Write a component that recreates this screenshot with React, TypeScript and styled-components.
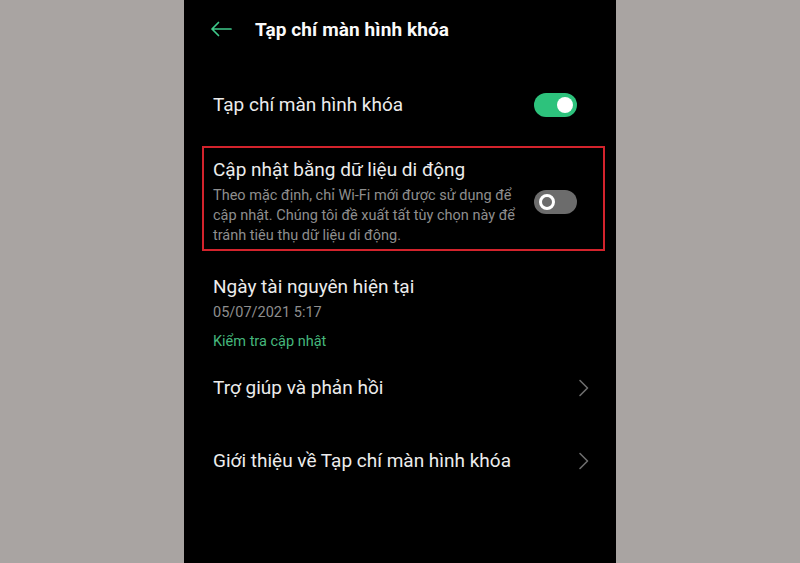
import React from 'react';
import styled, { createGlobalStyle } from 'styled-components';

const GlobalStyle = createGlobalStyle`
  html, body {
    margin: 0;
    padding: 0;
    background: #a9a4a2;
  }

  body {
    font-family: Roboto, "Noto Sans", "Liberation Sans", sans-serif;
  }
`;

const Page = styled.div`
  display: flex;
  justify-content: center;
  width: 800px;
  height: 563px;
  background: #a9a4a2;
`;

const Phone = styled.div`
  width: 432px;
  height: 563px;
  background: #000;
  display: flex;
  flex-direction: column;
  padding: 0 26px 0 29px;
  box-sizing: border-box;
  color: #ececec;
`;

const Header = styled.div`
  display: flex;
  align-items: center;
  height: 58px;
  margin-left: -3px;
  gap: 23px;
`;

const BackButton = styled.button`
  display: flex;
  align-items: center;
  padding: 0;
  border: 0;
  background: none;
  cursor: pointer;
`;

const Title = styled.h1`
  margin: 0;
  font-size: 19px;
  font-weight: 700;
  color: #fafafa;
  letter-spacing: 0.1px;
`;

const Row = styled.div<{ $mt: number }>`
  display: flex;
  align-items: center;
  justify-content: space-between;
  height: 52px;
  margin-top: ${p => p.$mt}px;
`;

const Label = styled.div`
  font-size: 19px;
  line-height: 24px;
  color: #ececec;
`;

const Highlight = styled.div`
  display: flex;
  align-items: center;
  justify-content: space-between;
  margin: 15px -15px 0 -11px;
  padding: 10px 26px 3px 9px;
  border: 2px solid #d3232c;
`;

const TextBlock = styled.div`
  display: flex;
  flex-direction: column;
`;

const Description = styled.div`
  margin-top: 4px;
  font-size: 14.5px;
  line-height: 20px;
  color: #8e8e8e;
  white-space: nowrap;

  span {
    display: block;
  }
`;

const InfoBlock = styled.div`
  display: flex;
  flex-direction: column;
  margin-top: 24px;
`;

const SubText = styled.div`
  margin-top: 4px;
  font-size: 14.5px;
  line-height: 20px;
  color: #8e8e8e;
`;

const LinkText = styled.a`
  margin-top: 9px;
  font-size: 14.5px;
  line-height: 20px;
  color: #45b77c;
  text-decoration: none;
  cursor: pointer;
`;

const Toggle = styled.div<{ $on: boolean }>`
  position: relative;
  flex-shrink: 0;
  width: 43px;
  height: 24px;
  border-radius: 12px;
  background: ${p => (p.$on ? '#2dc27c' : '#6c6c6c')};
`;

const Knob = styled.div<{ $on: boolean }>`
  position: absolute;
  top: 4px;
  left: ${p => (p.$on ? '23px' : '5px')};
  width: 16px;
  height: 16px;
  border-radius: 50%;
  box-sizing: border-box;
  background: ${p => (p.$on ? '#fff' : '#6c6c6c')};
  border: ${p => (p.$on ? '0' : '3px solid #fff')};
`;

const Chevron = () => (
  <svg width="12" height="18" viewBox="0 0 12 18" fill="none">
    <path d="M2 1.5 L9.5 9 L2 16.5" stroke="#6d6d6d" strokeWidth="1.6" strokeLinecap="round" strokeLinejoin="round" />
  </svg>
);

const BackArrow = () => (
  <svg width="22" height="16" viewBox="0 0 22 16" fill="none">
    <path d="M21 8 H2 M8.5 1.5 L2 8 L8.5 14.5" stroke="#3fc98a" strokeWidth="1.7" strokeLinecap="round" strokeLinejoin="round" />
  </svg>
);

const App = () => {
  return (
    <Page>
      <GlobalStyle />
      <Phone>
        <Header>
          <BackButton aria-label="back">
            <BackArrow />
          </BackButton>
          <Title>Tạp chí màn hình khóa</Title>
        </Header>

        <Row $mt={21}>
          <Label>Tạp chí màn hình khóa</Label>
          <Toggle $on style={{ marginRight: 13 }}>
            <Knob $on />
          </Toggle>
        </Row>

        <Highlight>
          <TextBlock>
            <Label>Cập nhật bằng dữ liệu di động</Label>
            <Description>
              <span>Theo mặc định, chỉ Wi-Fi mới được sử dụng để</span>
              <span>cập nhật. Chúng tôi đề xuất tất tùy chọn này để</span>
              <span>tránh tiêu thụ dữ liệu di động.</span>
            </Description>
          </TextBlock>
          <Toggle $on={false}>
            <Knob $on={false} />
          </Toggle>
        </Highlight>

        <InfoBlock>
          <Label>Ngày tài nguyên hiện tại</Label>
          <SubText>05/07/2021 5:17</SubText>
          <LinkText>Kiểm tra cập nhật</LinkText>
        </InfoBlock>

        <Row $mt={10}>
          <Label>Trợ giúp và phản hồi</Label>
          <Chevron />
        </Row>

        <Row $mt={21}>
          <Label>Giới thiệu về Tạp chí màn hình khóa</Label>
          <Chevron />
        </Row>
      </Phone>
    </Page>
  );
};

export default App;
